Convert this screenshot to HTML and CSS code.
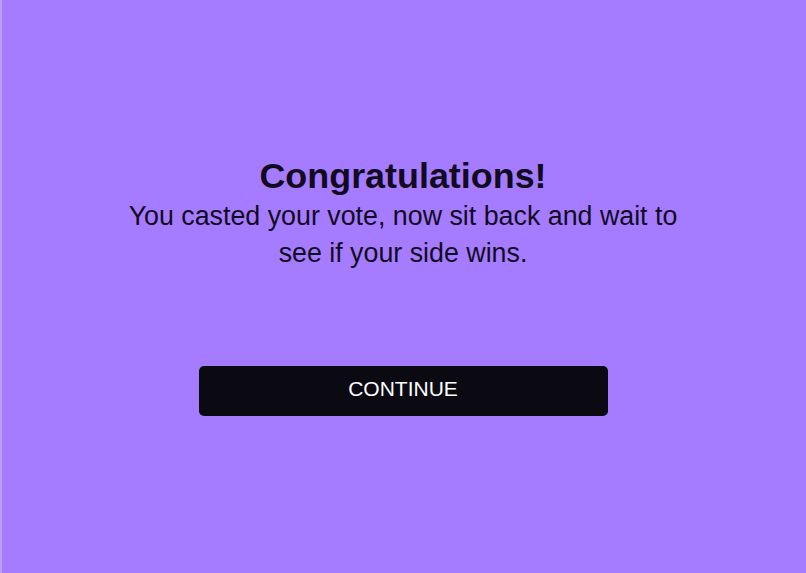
FILE: index.html
```html
<!DOCTYPE html>
<html lang="en">
<head>
<meta charset="utf-8">
<title>Congratulations</title>
<link rel="stylesheet" href="styles.css">
</head>
<body>
<main class="page">
  <section class="message">
    <h1 class="title">Congratulations!</h1>
    <p class="text">You casted your vote, now sit back and wait to see if your side wins.</p>
  </section>
  <button class="continue" type="button">CONTINUE</button>
</main>
</body>
</html>
```

FILE: styles.css
```css
* { box-sizing: border-box; }
html, body {
  margin: 0;
  padding: 0;
  height: 100%;
}
body {
  background: #a57cff;
  font-family: "Liberation Sans", Arial, Helvetica, sans-serif;
  color: #120a1f;
}
.page {
  min-height: 100vh;
  display: flex;
  flex-direction: column;
  align-items: center;
  padding-top: 155px;
  box-shadow: inset 2px 0 0 #b99cff;
}
.message {
  display: flex;
  flex-direction: column;
  align-items: center;
  text-align: center;
  width: 570px;
}
.title {
  margin: 0;
  font-size: 35.9px;
  line-height: 42.6px;
  font-weight: 700;
}
.text {
  margin: 0;
  font-size: 26.8px;
  line-height: 37.4px;
  font-weight: 400;
}
.continue {
  margin-top: 94px;
  width: 409px;
  height: 50px;
  border: none;
  border-radius: 5px;
  background: #0b0a12;
  color: #ffffff;
  font-family: "Liberation Sans", Arial, Helvetica, sans-serif;
  font-size: 21px;
  line-height: 1;
  padding: 0 0 6px 0;
  cursor: pointer;
}
```
